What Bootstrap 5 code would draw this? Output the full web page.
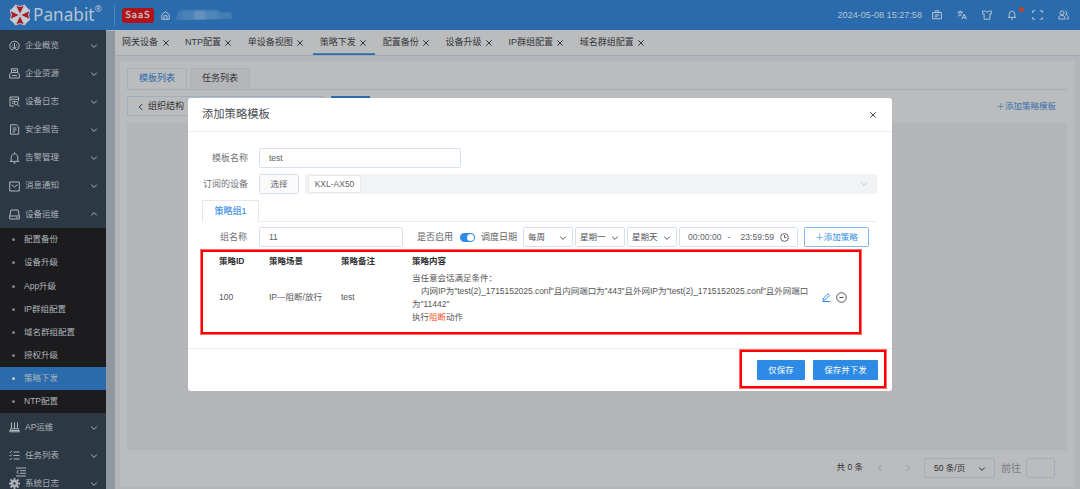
<!DOCTYPE html>
<html lang="zh-CN">
<head>
<meta charset="utf-8">
<meta name="viewport" content="width=device-width, initial-scale=1">
<title>Panabit</title>
<link href="https://cdn.jsdelivr.net/npm/bootstrap@5.3.0/dist/css/bootstrap.min.css" rel="stylesheet">
<style>
html,body{height:489px;overflow:hidden}
body{font:9px/1.3 "Liberation Sans","Noto Sans CJK SC",sans-serif;background:#b4b5b9;color:#303133;white-space:nowrap}
svg{fill:none;stroke:currentColor;stroke-width:1;flex:none;display:block}
.topbar{height:30px;background:#296bac;color:#b9c3ce;padding-left:10px;padding-right:11px}
.brand{font:400 17.2px/28px "Noto Sans",sans-serif;width:68px;margin-left:3px;color:#b5c3d1}
.brand sup{font-size:9px;top:-9px;left:0}
.vline{width:1px;height:21px;background:#4f82b5;margin-left:13px}
.saas{width:32px;height:15px;border-radius:3px;background:#af1419;color:#d5c3c8;font:400 8.5px/15px "DejaVu Sans",sans-serif;-webkit-text-stroke:.3px;letter-spacing:1px;text-align:center;margin:0 7px 0 7px}
.masked{width:58px;height:11px;margin-left:5px;filter:blur(1.8px);background:linear-gradient(90deg,#3f7cb4 0 14%,#4a82b7 14% 32%,#6692be 32% 52%,#5086b9 52% 75%,#457db3 75%);clip-path:polygon(8% 0,72% 0,78% 25%,96% 25%,100% 85%,0 100%)}
.side{width:106px;background:#2d3845;color:#aeb3b9;font-size:8.5px;padding-top:1px;height:459px;overflow:hidden;flex:none}
.mi{height:28.1px;padding:1px 8px 0 9px}
.mi span{margin-left:5px;flex:1}
.sub{background:#1c1c1e;height:185.3px}
.si{height:23.16px;padding:1px 0 0 12px;font-size:8.5px}
.si:before{content:"";width:3px;height:3px;border-radius:50%;background:#818286;margin-right:9px}
.si.on{background:#296bac}.si.on:before{background:#c0c9d1}
.gutter{width:9px;background:#91979f;margin-top:1px;flex:none}
.tabsbar{height:26px;background:#bbbcbe;border-bottom:1px solid #a1a8b7;color:#35373b}
.tb{padding:1px 8px 0 7px;height:25px;margin-right:.4px}
.tb svg{margin-left:3.5px}
.tb.on{border-bottom:1px solid #296bac;box-shadow:inset 0 -1px #4d7fb0}
.panel{margin:5px 6px 0 5px;height:426px;background:#bbbcbe;padding:7px 7px 0 7px}
.ptabs{height:22px;border-bottom:1px solid #acaeb2}
.pt{width:60px;height:21px;border:1px solid #acb0b6;border-bottom:0;margin-right:3px;color:#333;background:#b4b6ba}
.pt.on{color:#296bac;background:#bbbcbe}
.obox{height:20px;border:1px solid #a2aebb}
.void{height:327px;background:#b4b5b9;margin-top:7px}
.dialog{position:absolute;left:188px;top:98px;width:704px;height:293px;background:#fff;border-radius:3px;color:#606266}
.dh{height:34px;border-bottom:1px solid #ebeef3;padding:0 15px 0 14px;font-size:11.3px;color:#4a4d52}
.lb{color:#707378;text-align:right;width:60px;margin-right:11px;padding-top:2px}
.ib{height:20px;border:1px solid #d6e1f0;border-radius:1.5px;padding:1px 9px 0;background:#fff}
.sel{width:50px;margin-right:2px;padding:1px 5px 0 4px;font-size:8.5px;color:#505358}
.sw{width:15px;height:9px;border-radius:5px;background:#2d8ae5;margin:0 6px 0 6px;padding:1px}
.sw i{width:7px;height:7px;border-radius:50%;background:#fff}
.gtab{width:57px;height:22px;border:1px solid #e5e9ef;border-bottom:0;color:#3a8ee6;background:#fff;-webkit-text-stroke:.15px}
.rules{display:grid;grid-template-columns:50px 72px 71px 409px 1fr;margin:8px 27px 0 31px;font-size:8.5px;line-height:13px;color:#555}
.rules b{color:#303133;font-weight:700;height:15px}
.cond{margin-left:9px;letter-spacing:-.042px}
.foot{position:absolute;left:0;right:0;bottom:0;height:43px;border-top:1px solid #eaedf1;padding-right:14px}
.go{height:20px;background:#2d8ae5;color:#fff;font-size:8.5px;border-radius:1px;padding:0;border:0;line-height:20px}
.frame{position:absolute;border:2px solid red;box-shadow:0 0 0 1px #ff7373;pointer-events:none}
</style>
<script src="https://cdn.jsdelivr.net/npm/bootstrap@5.3.0/dist/js/bootstrap.bundle.min.js"></script>
</head>
<body class="position-relative">
<svg width="0" height="0" class="position-absolute">
<symbol id="x" viewBox="0 0 8 8"><path d="M1.3 1.3l5.4 5.4M6.7 1.3L1.3 6.7"/></symbol>
<symbol id="dn" viewBox="0 0 8 8"><path d="M1.2 2.6L4 5.4l2.8-2.8"/></symbol>
<symbol id="up" viewBox="0 0 8 8"><path d="M1.2 5.4L4 2.6l2.8 2.8"/></symbol>
</svg>
<header class="topbar d-flex align-items-center">
<svg width="20" height="22" viewBox="-10 -11 20 22" stroke="none"><path fill="#b01c26" d="M0 0L-4.5-10 0-8.5 4.5-10zM0 0L10-4.6 8.5 0 10 4.6zM0 0L4.5 10 0 8.5-4.5 10zM0 0L-10 4.6-8.5 0-10-4.6z"/><path fill="#c9ced5" d="M0 0L9.8-4.8 7-6.8 4.8-9.8zM0 0L9.8 4.8 7 6.8 4.8 9.8zM0 0L-9.8 4.8-7 6.8-4.8 9.8zM0 0L-9.8-4.8-7-6.8-4.8-9.8z"/></svg>
<div class="brand">Panabit<sup>®</sup></div>
<div class="vline"></div>
<div class="saas">SaaS</div>
<svg width="9" height="9" viewBox="0 0 9 9" stroke-width=".9"><path d="M.8 3.7L4.5.7l3.7 3v4.6H.8zM3 8V4.7h3V8"/></svg>
<div class="masked"></div>
<div class="ms-auto me-2" style="font-size:9.1px;padding-top:1px;margin-right:10px!important">2024-05-08 15:27:58</div>
<div class="d-flex align-items-center" style="gap:15px">
<svg width="10" height="10" viewBox="0 0 10 10"><path d="M.6 2.5h8.8v6.3H.6zM3.3 2.3V.8h3.4v1.5M2.7 5h4.6M2.7 6.8h2.8"/></svg>
<svg width="10" height="10" viewBox="0 0 10 10"><path d="M.5 2h5.5M3.2.6V2M1.3 2c.5 2 2 3 3.4 3.8M5 2C4.5 4 3 5.2.7 6.2M4.9 9.3L7.2 4l2.3 5.3M5.8 7.6h2.8"/></svg>
<svg width="10" height="10" viewBox="0 0 10 10"><path d="M.7 1h2.4c.7 1.4 3.1 1.4 3.8 0h2.4v3H7.9v5.2H2.1V4H.7z"/></svg>
<div class="position-relative"><svg width="10" height="10" viewBox="0 0 10 10"><path d="M1 7.4h8M2.2 7.3V4.4C2.2.1 7.8.1 7.8 4.4v2.9M4 9h2"/></svg><span class="position-absolute rounded-circle" style="width:4.5px;height:4.5px;background:#b9482f;left:12px;top:-3px"></span></div>
<svg width="11" height="10" viewBox="0 0 11 10"><path d="M.7 3V.8H3.2M7.8.8h2.5V3M10.3 7v2.2H7.8M3.2 9.2H.7V7"/></svg>
<svg width="11" height="10" viewBox="0 0 11 10"><circle cx="4" cy="2.8" r="2"/><path d="M.7 9V7.8C.7 4.7 7 4.7 7 7.8V9zM7.3 1c2 .5 2 3.2.2 3.6 1.7.2 2.8 1.4 2.8 3.3V9H8.5"/></svg>
</div>
</header>
<div class="d-flex">
<nav class="side">
<div class="mi d-flex align-items-center"><svg width="11" height="11" viewBox="0 0 11 11"><path d="M2.4 9.5A4.7 4.7 0 1 1 8.6 9.5M2.4 9.5H4M7 9.5h1.6M5.5 3v5.5M3 4.5l.8.6M8 4.5l-.8.6M2.5 7h1M7.5 7h1"/><circle cx="5.5" cy="8" r="1"/></svg><span>企业概览</span><svg width="8" height="8"><use href="#dn"/></svg></div>
<div class="mi d-flex align-items-center"><svg width="11" height="11" viewBox="0 0 11 11"><path d="M2.5 4.5V.8h6v3.7zM.7 10V6L2.5 4.4h6L10.3 6v4zM3 7.5h5M4 2.5h3"/></svg><span>企业资源</span><svg width="8" height="8"><use href="#dn"/></svg></div>
<div class="mi d-flex align-items-center"><svg width="11" height="11" viewBox="0 0 11 11"><path d="M5 10H1V1h8.6v4M1 3.3h8.6M3 5.4h3M3 7.5h1.5"/><circle cx="7.2" cy="7.2" r="1.8"/><path d="M8.5 8.5l2 2"/></svg><span>设备日志</span><svg width="8" height="8"><use href="#dn"/></svg></div>
<div class="mi d-flex align-items-center"><svg width="11" height="11" viewBox="0 0 11 11"><path d="M1.5.8h6l2.2 2v7.4H1.5zM3.5 4h4M3.5 6h4M3.5 8H6"/></svg><span>安全报告</span><svg width="8" height="8"><use href="#dn"/></svg></div>
<div class="mi d-flex align-items-center"><svg width="11" height="12" viewBox="0 0 11 12"><path d="M.7 9.4h9.6M2.2 9V5.2C2.2.7 8.8.7 8.8 5.2V9M5.5 2V.3M4.3 11h2.4"/></svg><span>告警管理</span><svg width="8" height="8"><use href="#dn"/></svg></div>
<div class="mi d-flex align-items-center"><svg width="11" height="11" viewBox="0 0 11 11"><path d="M.7 1h9.6v9H.7zM2.5 3.7L5.5 6l3-2.3"/></svg><span>消息通知</span><svg width="8" height="8"><use href="#dn"/></svg></div>
<div class="mi d-flex align-items-center"><svg width="11" height="11" viewBox="0 0 11 11"><path d="M2 1h7l1.3 6v3H.7V7zM.7 7h9.6M7 8.6h1.5"/></svg><span>设备运维</span><svg width="8" height="8"><use href="#up"/></svg></div>
<div class="sub">
<div class="si d-flex align-items-center">配置备份</div><div class="si d-flex align-items-center">设备升级</div><div class="si d-flex align-items-center">App升级</div><div class="si d-flex align-items-center">IP群组配置</div><div class="si d-flex align-items-center">域名群组配置</div><div class="si d-flex align-items-center">授权升级</div><div class="si on d-flex align-items-center">策略下发</div><div class="si d-flex align-items-center">NTP配置</div>
</div>
<div class="mi d-flex align-items-center"><svg width="11" height="11" viewBox="0 0 11 11"><path d="M2.5.5v6M5.5.5v6M8.5.5v6M1.5 6.8h8l.8 3H.7zM1 8.5h9"/></svg><span>AP运维</span><svg width="8" height="8"><use href="#dn"/></svg></div>
<div class="mi d-flex align-items-center"><svg width="11" height="11" viewBox="0 0 11 11"><path d="M4.5 2h6M4.5 5.5h6M4.5 9h6M.5 1.8l.9.9L3 .9M.5 5.3l.9.9L3 4.4M.5 8.8l.9.9L3 7.9"/></svg><span>任务列表</span><svg width="8" height="8"><use href="#dn"/></svg></div>
<div class="mi d-flex align-items-center"><svg width="11" height="11" viewBox="0 0 11 11"><circle cx="5.5" cy="5.5" r="2.5" stroke-width="2.4"/><path stroke-width="1.8" d="M5.5 0v2M5.5 9v2M0 5.5h2M9 5.5h2M1.5 1.5L3 3M8 8l1.5 1.5M9.5 1.5L8 3M3 8L1.5 9.5"/></svg><span>系统日志</span><svg width="8" height="8"><use href="#dn"/></svg></div>
</nav>
<div class="gutter"></div>
<main class="flex-grow-1">
<div class="tabsbar d-flex">
<div class="tb d-flex align-items-center">网关设备<svg width="8" height="8"><use href="#x"/></svg></div>
<div class="tb d-flex align-items-center">NTP配置<svg width="8" height="8"><use href="#x"/></svg></div>
<div class="tb d-flex align-items-center">单设备视图<svg width="8" height="8"><use href="#x"/></svg></div>
<div class="tb on d-flex align-items-center">策略下发<svg width="8" height="8"><use href="#x"/></svg></div>
<div class="tb d-flex align-items-center">配置备份<svg width="8" height="8"><use href="#x"/></svg></div>
<div class="tb d-flex align-items-center">设备升级<svg width="8" height="8"><use href="#x"/></svg></div>
<div class="tb d-flex align-items-center">IP群组配置<svg width="8" height="8"><use href="#x"/></svg></div>
<div class="tb d-flex align-items-center">域名群组配置<svg width="8" height="8"><use href="#x"/></svg></div>
</div>
<section class="panel">
<div class="ptabs d-flex"><div class="pt on d-flex align-items-center justify-content-center">模板列表</div><div class="pt d-flex align-items-center justify-content-center">任务列表</div></div>
<div class="d-flex align-items-center" style="margin-top:6px">
<div class="obox d-flex align-items-center" style="width:67px;padding:1px 0 0 10px"><svg width="6" height="8" viewBox="0 0 6 8" class="me-1"><path d="M4.3 1L1.3 4l3 3"/></svg>组织结构</div>
<div class="obox" style="width:130px"></div>
<div style="width:39px;height:20px;background:#296bac;margin-left:7px"></div>
<div class="ms-auto" style="color:#3a70ab;margin-right:11px;padding-top:1px;font-size:8.5px">＋添加策略模板</div>
</div>
<div class="void"></div>
<div class="d-flex align-items-center justify-content-end" style="height:36px;padding-right:12px;font-size:8.5px">
<span>共 0 条</span>
<svg width="6" height="8" viewBox="0 0 6 8" style="margin-left:14px;color:#94979d"><path d="M4.3 1L1.3 4l3 3"/></svg>
<svg width="6" height="8" viewBox="0 0 6 8" style="margin-left:22px;color:#94979d"><path d="M1.3 1l3 3-3 3"/></svg>
<div class="obox d-flex align-items-center justify-content-between" style="width:71px;margin-left:13px;padding:1px 8px 0 9px;border-radius:2px">50 条/页<svg width="8" height="8"><use href="#dn"/></svg></div>
<span style="font-size:10px;color:#777b82;margin:0 5px 0 6px">前往</span>
<div class="obox" style="width:29px;border-radius:2px"></div>
</div>
</section>
</main>
</div>
<svg class="position-absolute" width="10" height="10" viewBox="0 0 10 10" style="left:16px;top:467px;color:#aeb3b9"><path d="M0 1h10M4 3.7h6M4 6.3h6M0 9h10M2.6 3L.8 5l1.8 2"/></svg>

<div class="dialog">
<div class="dh d-flex align-items-center justify-content-between">添加策略模板<svg width="8" height="8"><use href="#x"/></svg></div>
<div class="d-flex align-items-center" style="margin-top:16px"><div class="lb">模板名称</div><div class="ib d-flex align-items-center" style="width:202px;font-size:8.5px">test</div></div>
<div class="d-flex align-items-center" style="margin-top:6px"><div class="lb">订阅的设备</div><div class="ib d-flex align-items-center justify-content-center" style="width:40px;font-size:8.5px;background:#fafafa">选择</div>
<div class="d-flex align-items-center justify-content-between" style="margin-left:6px;width:572px;height:20px;background:#f2f3f5;padding:0 9px 0 3px"><div class="d-flex align-items-center justify-content-center" style="width:53px;height:18px;background:#fff;border:1px solid #e6e9ed;border-radius:2px;font-size:8.5px;padding-top:2px">KXL-AX50</div><svg width="8" height="8" style="color:#c3c7ce"><use href="#dn"/></svg></div></div>
<div class="d-flex" style="margin:6px 15px 0 14px;height:22px;border-bottom:1px solid #e8ebf0"><div class="gtab d-flex align-items-center justify-content-center">策略组1</div></div>
<div class="d-flex align-items-center" style="margin-top:5px"><div class="lb" style="width:59px;margin-right:12px">组名称</div><div class="ib d-flex align-items-center" style="width:144px;font-size:8.5px">11</div>
<span style="margin-left:14px;padding-top:1px">是否启用</span><div class="sw d-flex justify-content-end align-items-center" style="margin-left:7px"><i></i></div><span style="margin-right:6px;padding-top:1px">调度日期</span>
<div class="ib sel d-flex align-items-center justify-content-between">每周<svg width="8" height="8"><use href="#dn"/></svg></div>
<div class="ib sel d-flex align-items-center justify-content-between">星期一<svg width="8" height="8"><use href="#dn"/></svg></div>
<div class="ib sel d-flex align-items-center justify-content-between">星期天<svg width="8" height="8"><use href="#dn"/></svg></div>
<div class="ib d-flex align-items-center justify-content-between" style="width:119px;padding:1px 8px 0;font-size:8.6px"><span>00:00:00</span><span>-</span><span class="ms-1">23:59:59</span><svg width="9" height="9" viewBox="0 0 9 9"><circle cx="4.5" cy="4.5" r="3.9"/><path d="M4.5 2v2.7h2"/></svg></div>
<div class="ib d-flex align-items-center justify-content-center" style="width:65px;margin-left:6px;padding:1px 0 0;border-color:#80b7f0;color:#2d8ae5;font-size:8.5px">＋添加策略</div></div>
<div class="rules align-items-center">
<b>策略ID</b><b>策略场景</b><b>策略备注</b><b>策略内容</b><b></b>
<span>100</span><span>IP—阻断/放行</span><span>test</span>
<div style="padding-top:2px">当任意会话满足条件：<br><span class="cond">内网IP为"test(2)_1715152025.conf"且内网端口为"443"且外网IP为"test(2)_1715152025.conf"且外网端口</span><br>为"11442"<br>执行<span style="color:#ff4c20">阻断</span>动作</div>
<div class="d-flex align-items-center justify-content-between" style="width:25px;margin-left:1px"><svg width="9" height="9" viewBox="0 0 9 9" style="color:#2d8ae5"><path d="M1 7.2l.4-2L5.8.8l1.6 1.6L3 6.8zM.3 8.5h8"/></svg><svg width="11" height="11" viewBox="0 0 11 11"><circle cx="5.5" cy="5.5" r="4.8"/><path d="M3.3 5.5h4.4"/></svg></div>
</div>
<div class="foot d-flex align-items-center justify-content-end" style="gap:8px"><button class="btn go" style="width:48px">仅保存</button><button class="btn go" style="width:65px">保存并下发</button></div>
<div class="frame" style="left:13px;top:152px;width:660px;height:84px"></div>
<div class="frame" style="left:552px;top:252px;width:146px;height:38px"></div>
</div>
</body>
</html>
